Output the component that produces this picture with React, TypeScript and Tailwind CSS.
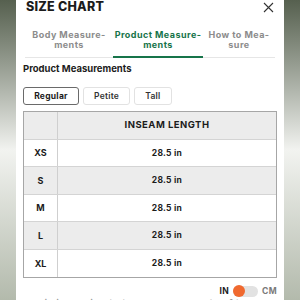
import { useState } from 'react'

// 사이즈 표 데이터
const rows = [
  { size: 'XS', value: '28.5 in' },
  { size: 'S', value: '28.5 in' },
  { size: 'M', value: '28.5 in' },
  { size: 'L', value: '28.5 in' },
  { size: 'XL', value: '28.5 in' },
]

const fits = ['Regular', 'Petite', 'Tall']

export default function App() {
  const [fit, setFit] = useState('Regular')

  return (
    <div
      className="w-[300px] h-[300px] overflow-hidden flex bg-gradient-to-b from-[#56604f] via-[#f2f3f0] to-[#b3baac]"
      style={{ fontFamily: 'Inter, "Liberation Sans", sans-serif' }}
    >
      <div className="w-[16px] shrink-0" />

      {/* 모달 본문 */}
      <div className="w-[268px] shrink-0 bg-white px-[7px] text-[#1c1c1c]">
        {/* 제목 */}
        <div className="flex items-start justify-between h-[28px]">
          <h2 className="text-[12.5px] leading-[14px] font-extrabold tracking-[0.02em] pl-[3px]">
            SIZE CHART
          </h2>
          <svg width="11" height="11" viewBox="0 0 11 11" className="mt-[2px] mr-[3px]">
            <path d="M1 1L10 10M10 1L1 10" stroke="#333" strokeWidth="1.1" />
          </svg>
        </div>

        {/* 탭 */}
        <div className="mx-[2px] flex border-b border-[#e6e6e6] text-[9px] leading-[10px] font-bold tracking-[0.05em] text-center">
          <div className="w-[88px] pt-[2px] pb-[7px] text-[#8c8c8c]">
            Body Measure-<br />ments
          </div>
          <div className="w-[90px] pt-[2px] pb-[6px] text-[#17744a] border-b-2 border-[#17744a] -mb-px">
            Product Measure-<br />ments
          </div>
          <div className="w-[72px] pt-[2px] pb-[7px] text-[#8c8c8c]">
            How to Mea-<br />sure
          </div>
        </div>

        {/* 소제목 */}
        <p className="mt-[5px] text-[9.5px] leading-[11px] font-bold">Product Measurements</p>

        {/* 핏 선택 */}
        <div className="mt-[13px] flex gap-[4px]">
          {fits.map(f => (
            <button
              key={f}
              type="button"
              onClick={() => setFit(f)}
              className={
                f === fit
                  ? 'h-[18px] w-[56px] rounded-[3px] border border-[#6a6a6a] text-[8.5px] font-bold tracking-[0.03em]'
                  : 'h-[18px] px-[10px] rounded-[3px] border border-[#e2e2e2] text-[8.5px] font-semibold tracking-[0.03em] text-[#333]'
              }
            >
              {f}
            </button>
          ))}
        </div>

        {/* 사이즈 표 */}
        <div className="mt-[6px] border border-[#a6a6a6] text-[8.5px] font-bold">
          <div className="flex h-[28px] bg-[#ececec] border-b border-[#d4d4d4]">
            <div className="w-[34px] border-r border-[#cfcfcf]" />
            <div className="flex-1 flex items-center justify-center text-[9.5px] tracking-[0.05em]">
              INSEAM LENGTH
            </div>
          </div>
          {rows.map((r, i) => (
            <div
              key={r.size}
              className={
                (i % 2 === 1 ? 'bg-[#ececec] ' : 'bg-white ') +
                (i < rows.length - 1 ? 'border-b border-[#d4d4d4] ' : '') +
                'flex h-[27.4px]'
              }
            >
              <div className="w-[34px] border-r border-[#cfcfcf] flex items-center justify-center text-[9px]">
                {r.size}
              </div>
              <div className="flex-1 flex items-center justify-center tracking-[0.03em]">{r.value}</div>
            </div>
          ))}
        </div>

        {/* 단위 토글 */}
        <div className="mt-[7px] flex items-center justify-end gap-[4px] text-[8.5px] font-bold tracking-[0.04em]">
          <span>IN</span>
          <div className="w-[25px] h-[11px] rounded-full bg-[#e2e2e2] flex items-center">
            <div className="w-[12px] h-[12px] rounded-full bg-[#f0692f]" />
          </div>
          <span className="text-[#7a7a7a]">CM</span>
        </div>

        {/* 안내 문구 (잘림) */}
        <p className="mt-[-1px] pl-[8px] text-[11px] leading-[14px] text-[#9a9a9a]">
          This is a guide to the measurements of the product.
        </p>
      </div>

      <div className="w-[16px] shrink-0" />
    </div>
  )
}
